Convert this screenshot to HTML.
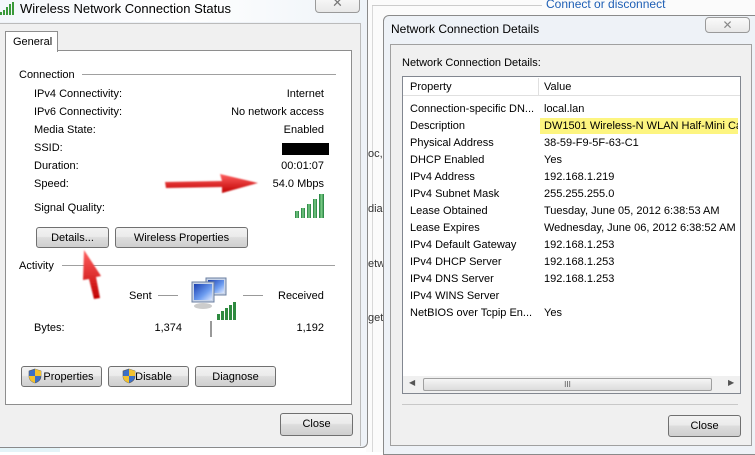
<!DOCTYPE html>
<html><head><meta charset="utf-8">
<style>
*{margin:0;padding:0;box-sizing:border-box}
body{width:755px;height:452px;overflow:hidden;background:#fff;font-family:"Liberation Sans",sans-serif;font-size:11px;color:#000;position:relative}
.a{position:absolute;white-space:nowrap}
.btn{position:absolute;border:1px solid #707070;border-radius:3px;background:linear-gradient(#f2f2f2,#ebebeb 45%,#dddddd 50%,#cfcfcf);text-align:center;font-size:11px;line-height:20px}
.r{text-align:right}
</style></head><body>
<div class="a" style="left:366px;top:0;width:389px;height:452px;background:#fbfbfb"></div>
<div class="a" style="left:372px;top:5px;width:1px;height:447px;background:#d8d8d8"></div>
<div class="a" style="left:372px;top:5px;width:170px;height:1px;background:#ccc"></div>
<div class="a" style="left:546px;top:-3px;color:#1e5fb5;font-size:12px">Connect or disconnect</div>
<div class="a" style="left:368px;top:148px;color:#333">oc,</div>
<div class="a" style="left:368px;top:203px;color:#333">dia</div>
<div class="a" style="left:368px;top:258px;color:#333">etw</div>
<div class="a" style="left:368px;top:312px;color:#333">get</div>

<!-- LEFT WINDOW -->
<div class="a" style="left:0;top:0;width:368px;height:448px;background:#eef2f7;border-right:1px solid #8a8a8a;border-bottom:1px solid #8a8a8a;border-radius:0 0 6px 0"></div>
<div class="a" style="left:0;top:0;width:367px;height:22px;background:linear-gradient(90deg,#f4f7fb,#fff 50%,#eef3f8)"></div>
<svg class="a" style="left:0;top:2px" width="16" height="14"><g fill="#3a9a3a"><rect x="0" y="10" width="2" height="3"/><rect x="3" y="8" width="2" height="5"/><rect x="6" y="5" width="2" height="8"/><rect x="9" y="2" width="2" height="11"/><rect x="12" y="0" width="2" height="13"/></g></svg>
<div class="a" style="left:20px;top:1px;font-size:13px">Wireless Network Connection Status</div>
<div class="a" style="left:315px;top:-4px;width:45px;height:17px;border:1px solid #9a9a9a;border-top:none;border-radius:0 0 4px 4px;background:linear-gradient(#fafafa,#e8e8e8);text-align:center;color:#777;font-size:13px;line-height:14px">✕</div>
<div class="a" style="left:0;top:23px;width:361px;height:423px;background:#f0f0f0;border-right:1px solid #bbb;border-top:1px solid #bbb"></div>
<div class="a" style="left:5px;top:50px;width:347px;height:355px;background:#fff;border:1px solid #8e8e8e"></div>
<div class="a" style="left:5px;top:31px;width:53px;height:21px;background:#fff;border:1px solid #8e8e8e;border-bottom:none;padding:4px 0 0 7px">General</div>
<div class="a" style="left:19px;top:69px">Connection</div>
<div class="a" style="left:82px;top:74px;width:254px;height:1px;background:#a0a0a0"></div>
<div class="a" style="left:34px;top:88px">IPv4 Connectivity:</div>
<div class="a" style="left:34px;top:106px">IPv6 Connectivity:</div>
<div class="a" style="left:34px;top:124px">Media State:</div>
<div class="a" style="left:34px;top:142px">SSID:</div>
<div class="a" style="left:34px;top:160px">Duration:</div>
<div class="a" style="left:34px;top:178px">Speed:</div>
<div class="a" style="left:34px;top:202px">Signal Quality:</div>
<div class="a r" style="right:431px;top:88px">Internet</div>
<div class="a r" style="right:431px;top:106px">No network access</div>
<div class="a r" style="right:431px;top:124px">Enabled</div>
<div class="a" style="left:282px;top:143px;width:47px;height:12px;background:#000"></div>
<div class="a r" style="right:431px;top:160px">00:01:07</div>
<div class="a r" style="right:431px;top:178px">54.0 Mbps</div>
<svg class="a" style="left:295px;top:194px" width="32" height="25"><defs><linearGradient id="g" x1="0" x2="1"><stop offset="0" stop-color="#1d7a3a"/><stop offset=".5" stop-color="#7fd08a"/><stop offset="1" stop-color="#1d7a3a"/></linearGradient></defs><g fill="url(#g)"><rect x="0" y="17" width="4" height="7"/><rect x="6" y="14" width="4" height="10"/><rect x="12" y="10" width="4" height="14"/><rect x="18" y="5" width="4" height="19"/><rect x="24" y="0" width="5" height="24"/></g></svg>
<div class="btn" style="left:36px;top:227px;width:73px;height:21px">Details...</div>
<div class="btn" style="left:115px;top:227px;width:133px;height:21px">Wireless Properties</div>
<div class="a" style="left:19px;top:260px">Activity</div>
<div class="a" style="left:62px;top:265px;width:273px;height:1px;background:#a0a0a0"></div>
<div class="a" style="left:129px;top:290px">Sent</div>
<div class="a" style="left:158px;top:295px;width:20px;height:1px;background:#999"></div>
<div class="a" style="left:243px;top:295px;width:20px;height:1px;background:#999"></div>
<div class="a" style="left:278px;top:290px">Received</div>
<svg class="a" style="left:190px;top:276px" width="50" height="45"><defs><linearGradient id="s" x1="0" y1="0" x2="1" y2="1"><stop offset="0" stop-color="#1a3fb0"/><stop offset=".6" stop-color="#6c9cf0"/><stop offset="1" stop-color="#dde8ff"/></linearGradient></defs><rect x="16" y="2" width="20" height="17" fill="#c8d4e8" stroke="#6b7fa0"/><rect x="18" y="4" width="16" height="13" fill="url(#s)"/><rect x="2" y="6" width="22" height="20" fill="#c8d4e8" stroke="#6b7fa0"/><rect x="4" y="8" width="18" height="16" fill="url(#s)"/><ellipse cx="13" cy="30" rx="9" ry="3" fill="#ccc"/><g fill="#2e8a3f"><rect x="27" y="38" width="3" height="6"/><rect x="31" y="35" width="3" height="9"/><rect x="35" y="32" width="3" height="12"/><rect x="39" y="29" width="3" height="15"/><rect x="43" y="26" width="3" height="18"/></g></svg>
<div class="a" style="left:34px;top:322px">Bytes:</div>
<div class="a r" style="right:573px;top:322px">1,374</div>
<div class="a r" style="right:431px;top:322px">1,192</div>
<div class="a" style="left:210px;top:321px;width:2px;height:16px;background:#999"></div>
<svg width="0" height="0" style="position:absolute"><defs><g id="sh"><path d="M7 1 L13 3 L13 8 C13 12 10 14 7 15 C4 14 1 12 1 8 L1 3 Z" fill="#3b6fc9" stroke="#555" stroke-width=".6"/><path d="M7 1 L13 3 L13 8 L7 8 Z" fill="#f2c230"/><path d="M1 8 L7 8 L7 15 C4 14 1 12 1 8 Z" fill="#f2c230"/></g></defs></svg>
<div class="btn" style="left:21px;top:366px;width:81px;height:21px;padding-left:14px">Properties</div>
<svg class="a" style="left:28px;top:368px" width="15" height="16"><use href="#sh"/></svg>
<div class="btn" style="left:108px;top:366px;width:81px;height:21px;padding-left:10px">Disable</div>
<svg class="a" style="left:122px;top:368px" width="15" height="16"><use href="#sh"/></svg>
<div class="btn" style="left:195px;top:366px;width:81px;height:21px">Diagnose</div>
<div class="btn" style="left:280px;top:413px;width:73px;height:23px;line-height:21px">Close</div>
<div class="a" style="left:0;top:448px;width:60px;height:4px;background:#e4f4f8"></div>

<!-- RIGHT WINDOW -->
<div class="a" style="left:383px;top:15px;width:380px;height:440px;background:#eef2f7;border:1px solid #8a8a8a;border-radius:6px 6px 0 0"></div>
<div class="a" style="left:391px;top:22px;font-size:12px">Network Connection Details</div>
<div class="a" style="left:705px;top:17px;width:45px;height:16px;border:1px solid #9a9a9a;border-radius:4px;background:linear-gradient(#fafafa,#e8e8e8);text-align:center;color:#888;font-size:12px;line-height:14px">✕</div>
<div class="a" style="left:390px;top:44px;width:362px;height:402px;background:#f0f0f0;border:1px solid #a0a0a0"></div>
<div class="a" style="left:402px;top:57px">Network Connection Details:</div>
<div class="a" style="left:402px;top:76px;width:339px;height:318px;background:#fff;border:1px solid #828790"></div>
<div class="a" style="left:403px;top:77px;width:337px;height:19px;background:#fff;border-bottom:1px solid #e0e0e0"></div>
<div class="a" style="left:538px;top:78px;width:1px;height:17px;background:#e0e0e0"></div>
<div class="a" style="left:410px;top:81px">Property</div>
<div class="a" style="left:544px;top:81px">Value</div>
<div class="a" style="left:540px;top:118px;width:198px;height:16px;background:#fdf580"></div>
<div class="a" style="left:410px;top:101px;line-height:17px">Connection-specific DN...<br>Description<br>Physical Address<br>DHCP Enabled<br>IPv4 Address<br>IPv4 Subnet Mask<br>Lease Obtained<br>Lease Expires<br>IPv4 Default Gateway<br>IPv4 DHCP Server<br>IPv4 DNS Server<br>IPv4 WINS Server<br>NetBIOS over Tcpip En...</div>
<div class="a" style="left:544px;top:101px;line-height:17px;width:194px;overflow:hidden">local.lan<br>DW1501 Wireless-N WLAN Half-Mini Card<br>38-59-F9-5F-63-C1<br>Yes<br>192.168.1.219<br>255.255.255.0<br>Tuesday, June 05, 2012 6:38:53 AM<br>Wednesday, June 06, 2012 6:38:52 AM<br>192.168.1.253<br>192.168.1.253<br>192.168.1.253<br><br>Yes</div>
<div class="a" style="left:403px;top:376px;width:337px;height:17px;background:#f0f0f0"></div>
<div class="a" style="left:409px;top:378px;font-size:8px;color:#555">◀</div>
<div class="a" style="left:728px;top:378px;font-size:8px;color:#555">▶</div>
<div class="a" style="left:423px;top:378px;width:289px;height:13px;border:1px solid #a0a0a0;border-radius:2px;background:linear-gradient(#f5f5f5,#dcdcdc);text-align:center;font-size:8px;line-height:11px;color:#555">III</div>
<div class="a" style="left:402px;top:404px;width:336px;height:1px;background:#c8c8c8"></div>
<div class="btn" style="left:668px;top:415px;width:73px;height:22px;line-height:20px">Close</div>

<svg class="a" style="left:0;top:0" width="755" height="452"><defs><filter id="b"><feGaussianBlur stdDeviation="0.8"/></filter><linearGradient id="rg" x1="0" y1="0" x2="0" y2="1"><stop offset="0" stop-color="#ff6060"/><stop offset="1" stop-color="#c00000"/></linearGradient></defs>
<path d="M165 182 L222 181 L220 174 L258 183 L222 193 L222 187 L166 188 Z" fill="url(#rg)" filter="url(#b)"/>
<path d="M84 250 L101 276 L96 277 L100 298 L94 299 L89 279 L83 280 Z" fill="url(#rg)" filter="url(#b)"/>
</svg>
</body></html>
